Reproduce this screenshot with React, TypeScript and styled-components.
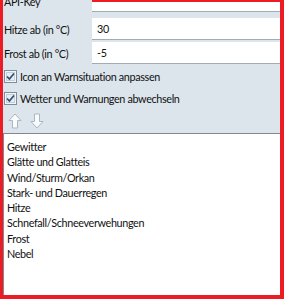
import styled, { createGlobalStyle } from 'styled-components'

const GlobalStyle = createGlobalStyle`
	html, body {
		margin: 0;
		padding: 0;
		background: #ffffff;
	}
`

const fields = [
	{ label: 'API-Key', value: '', gap: -10 },
	{ label: 'Hitze ab (in °C)', value: '30', gap: 6 },
	{ label: 'Frost ab (in °C)', value: '-5', gap: 2 },
]

const options = ['Icon an Warnsituation anpassen', 'Wetter und Warnungen abwechseln']

const warnings = [
	'Gewitter',
	'Glätte und Glatteis',
	'Wind/Sturm/Orkan',
	'Stark- und Dauerregen',
	'Hitze',
	'Schnefall/Schneeverwehungen',
	'Frost',
	'Nebel',
]

/**
 * checkbox in the old windows look
 */
function CheckIcon() {
	return (
		<svg width="13" height="13" viewBox="0 0 13 13">
			<rect x="0.5" y="0.5" width="12" height="12" fill="#f3f6f9" stroke="#7d8e9e" />
			<rect x="2.5" y="2.5" width="8" height="8" fill="#e6edf3" stroke="#c3ced8" />
			<path d="M3 6.5 L5.4 9 L10 3.5" fill="none" stroke="#2f4d74" strokeWidth="1.7" />
		</svg>
	)
}

function ArrowIcon({ down }: { down?: boolean }) {
	return (
		<svg width="14" height="16" viewBox="0 0 14 16" style={down ? { transform: 'rotate(180deg)' } : undefined}>
			<path d="M7 1 L13 7.5 H9.5 V15 H4.5 V7.5 H1 Z" fill="#fbfcfd" stroke="#aeb7c0" strokeLinejoin="round" />
		</svg>
	)
}

export default function App(): JSX.Element {
	return (
		<>
			<GlobalStyle />
			<Frame>
				<TopMark />
				<Panel>
					{fields.map((f) => (
						<FieldRow key={f.label} $gap={f.gap}>
							<Label>{f.label}</Label>
							<TextInput type="text" defaultValue={f.value} readOnly />
						</FieldRow>
					))}
					<Options>
						{options.map((o) => (
							<CheckRow key={o}>
								<CheckIcon />
								<span>{o}</span>
							</CheckRow>
						))}
					</Options>
					<ArrowRow>
						<ArrowIcon />
						<ArrowIcon down />
					</ArrowRow>
				</Panel>
				<List>
					{warnings.map((w) => (
						<Item key={w}>{w}</Item>
					))}
				</List>
			</Frame>
		</>
	)
}

const Frame = styled.div`
	position: relative;
	width: 284px;
	height: 299px;
	box-sizing: border-box;
	border-left: 3px solid #ed1c24;
	border-right: 4px solid #ed1c24;
	border-bottom: 4px solid #ed1c24;
	display: flex;
	flex-direction: column;
	overflow: hidden;
	font-family: Lato, sans-serif;
	font-size: 10.8px;
	letter-spacing: -0.35px;
	color: #111;
	background: #fff;
`
// the red annotation frame, its top edge only shows over the input
const TopMark = styled.div`
	position: absolute;
	top: 0;
	left: 89px;
	right: 0;
	height: 2px;
	background: #ed1c24;
	z-index: 2;
`
const Panel = styled.div`
	background: #dce5ec;
	height: 133px;
	flex: none;
	display: flex;
	flex-direction: column;
	padding-left: 1px;
`
const FieldRow = styled.div<{ $gap: number }>`
	display: grid;
	grid-template-columns: 88px 1fr;
	align-items: center;
	height: 22px;
	margin-top: ${({ $gap }) => $gap}px;
`
const Label = styled.span`
	white-space: nowrap;
`
const TextInput = styled.input`
	box-sizing: border-box;
	height: 22px;
	width: 100%;
	margin: 0;
	border: none;
	border-bottom: 1px solid #a3abb3;
	background: #fff;
	padding: 0 5px;
	font: inherit;
	letter-spacing: inherit;
	color: inherit;
	outline: none;
`
const Options = styled.div`
	margin-top: 1px;
	display: flex;
	flex-direction: column;
`
const CheckRow = styled.div`
	display: flex;
	align-items: center;
	gap: 3px;
	height: 22px;
	white-space: nowrap;
`
const ArrowRow = styled.div`
	display: flex;
	align-items: center;
	gap: 8px;
	height: 24px;
	padding-left: 4px;
`
const List = styled.div`
	flex: 1;
	border-top: 1px solid #828790;
	border-left: 1px solid #828790;
	padding: 5px 0 0 3px;
	background: #fff;
`
const Item = styled.div`
	line-height: 15.3px;
	white-space: nowrap;
`
